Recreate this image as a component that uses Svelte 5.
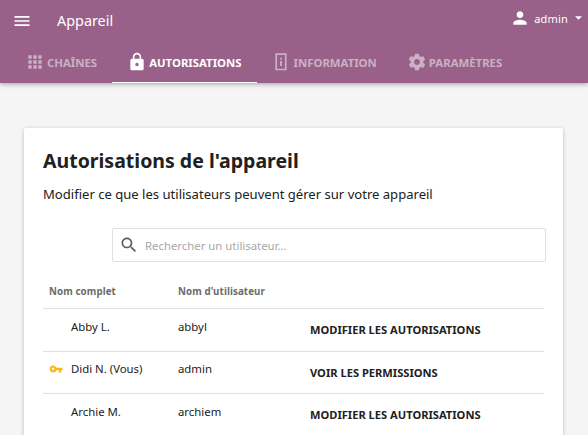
<script>
  const tabs = [
    { label: 'CHAÎNES', icon: 'grid' },
    { label: 'AUTORISATIONS', icon: 'lock', active: true },
    { label: 'INFORMATION', icon: 'info' },
    { label: 'PARAMÈTRES', icon: 'gear' }
  ];
  const paths = {
    grid: 'M4 8h4V4H4v4zm6 12h4v-4h-4v4zm-6 0h4v-4H4v4zm0-6h4v-4H4v4zm6 0h4v-4h-4v4zm6-10v4h4V4h-4zm-6 4h4V4h-4v4zm6 6h4v-4h-4v4zm0 6h4v-4h-4v4z',
    lock: 'M18 8h-1V6c0-2.76-2.24-5-5-5S7 3.24 7 6v2H6c-1.1 0-2 .9-2 2v10c0 1.1.9 2 2 2h12c1.1 0 2-.9 2-2V10c0-1.1-.9-2-2-2zm-6 9c-1.1 0-2-.9-2-2s.9-2 2-2 2 .9 2 2-.9 2-2 2zm3.1-9H8.9V6c0-1.71 1.39-3.1 3.1-3.1 1.71 0 3.1 1.39 3.1 3.1v2z',
    info: 'M4 1.5h13.5V22H4V1.5zm2 2v16.5h9.5V3.5H6zM9.7 7h2.2v2.4H9.7V7zm0 3.8h2.2v6H9.7v-6z',
    gear: 'M19.43 12.98c.04-.32.07-.64.07-.98s-.03-.66-.07-.98l2.11-1.65c.19-.15.24-.42.12-.64l-2-3.46c-.12-.22-.39-.3-.61-.22l-2.49 1c-.52-.4-1.08-.73-1.69-.98l-.38-2.65C14.46 2.18 14.25 2 14 2h-4c-.25 0-.46.18-.49.42l-.38 2.65c-.61.25-1.17.59-1.69.98l-2.49-1c-.23-.09-.49 0-.61.22l-2 3.46c-.13.22-.07.49.12.64l2.11 1.65c-.04.32-.07.65-.07.98s.03.66.07.98l-2.11 1.65c-.19.15-.24.42-.12.64l2 3.46c.12.22.39.3.61.22l2.49-1c.52.4 1.08.73 1.69.98l.38 2.65c.03.24.24.42.49.42h4c.25 0 .46-.18.49-.42l.38-2.65c.61-.25 1.17-.59 1.69-.98l2.49 1c.23.09.49 0 .61-.22l2-3.46c.12-.22.07-.49-.12-.64l-2.11-1.65zM12 15.5c-1.93 0-3.5-1.57-3.5-3.5s1.57-3.5 3.5-3.5 3.5 1.57 3.5 3.5-1.57 3.5-3.5 3.5z'
  };
  const rows = [
    { name: 'Abby L.', user: 'abbyl', action: 'MODIFIER LES AUTORISATIONS' },
    { name: 'Didi N. (Vous)', user: 'admin', action: 'VOIR LES PERMISSIONS', key: true },
    { name: 'Archie M.', user: 'archiem', action: 'MODIFIER LES AUTORISATIONS' }
  ];
</script>

<div class="page">
  <header class="bar">
    <div class="top">
      <svg class="menu" viewBox="0 0 24 24" width="20" height="20"><path d="M3 18h18v-2H3v2zm0-5h18v-2H3v2zm0-7v2h18V6H3z" /></svg>
      <span class="title">Appareil</span>
      <div class="user">
        <svg viewBox="0 0 24 24" width="20" height="20"><path d="M12 12c2.21 0 4-1.79 4-4s-1.79-4-4-4-4 1.79-4 4 1.79 4 4 4zm0 2c-2.67 0-8 1.34-8 4v2h16v-2c0-2.66-5.33-4-8-4z" /></svg>
        <span class="uname">admin</span>
        <svg class="caret" viewBox="0 0 10 5" width="7" height="4"><path d="M0 0l5 5 5-5z" /></svg>
      </div>
    </div>
    <nav class="tabs">
      {#each tabs as t}
        <div class="tab" class:active={t.active}>
          <svg viewBox="0 0 24 24" width="20" height="20"><path fill-rule="evenodd" d={paths[t.icon]} /></svg>
          <span>{t.label}</span>
        </div>
      {/each}
    </nav>
  </header>

  <main class="content">
    <section class="card">
      <h1>Autorisations de l'appareil</h1>
      <p>Modifier ce que les utilisateurs peuvent gérer sur votre appareil</p>
      <div class="search">
        <svg viewBox="0 0 24 24" width="20" height="20"><path d="M15.5 14h-.79l-.28-.27C15.41 12.59 16 11.11 16 9.5 16 5.91 13.09 3 9.5 3S3 5.91 3 9.5 5.91 16 9.5 16c1.61 0 3.09-.59 4.23-1.57l.27.28v.79l5 4.99L20.49 19l-4.99-5zm-6 0C7.01 14 5 11.99 5 9.5S7.01 5 9.5 5 14 7.01 14 9.5 11.99 14 9.5 14z" /></svg>
        <span>Rechercher un utilisateur...</span>
      </div>
      <div class="thead row">
        <div class="c1">Nom complet</div>
        <div class="c2">Nom d'utilisateur</div>
      </div>
      {#each rows as r}
        <div class="row item">
          <div class="c1">
            <span class="keyslot">
              {#if r.key}
                <svg viewBox="0 0 24 24" width="14" height="14"><path d="M12.65 10C11.83 7.67 9.61 6 7 6c-3.31 0-6 2.69-6 6s2.69 6 6 6c2.61 0 4.83-1.67 5.65-4H17v4h4v-4h2v-4H12.65zM7 14c-1.1 0-2-.9-2-2s.9-2 2-2 2 .9 2 2-.9 2-2 2z" /></svg>
              {/if}
            </span>
            {r.name}
          </div>
          <div class="c2">{r.user}</div>
          <div class="c3">{r.action}</div>
        </div>
      {/each}
    </section>
  </main>
</div>

<style>
  :global(body) {
    margin: 0;
    background: #f5f5f5;
    font-family: "Noto Sans", sans-serif;
    overflow: hidden;
  }
  .page {
    height: 435px;
    overflow: hidden;
  }
  .bar {
    background: #996189;
    color: #fff;
    height: 83px;
    box-shadow: 0 1px 5px rgba(0, 0, 0, 0.35);
    display: flex;
    flex-direction: column;
    position: relative;
  }
  .top {
    height: 41px;
    display: flex;
    align-items: center;
    padding: 0 6px 0 12px;
  }
  .top svg { fill: #fff; }
  .title {
    margin-left: 25px;
    font-size: 14.4px;
  }
  .user {
    margin-left: auto;
    display: flex;
    align-items: center;
    margin-top: -5px;
  }
  .uname {
    font-size: 11px;
    margin-left: 4px;
    margin-right: 7px;
    letter-spacing: 0.2px;
  }
  .tabs {
    display: flex;
    height: 42px;
    padding-left: 10px;
  }
  .tab {
    display: flex;
    align-items: center;
    gap: 2px;
    padding: 0 15px;
    font-size: 11.375px;
    font-weight: 700;
    color: rgba(255, 255, 255, 0.5);
    box-sizing: border-box;
  }
  .tab svg { fill: currentColor; flex: none; }
  .tab.active {
    color: #fff;
    border-bottom: 1px solid #fff;
    padding-top: 1px;
  }
  .content {
    padding: 45px 25px 0 24px;
  }
  .card {
    background: #fff;
    border-radius: 2px;
    box-shadow: 0 1px 4px rgba(0, 0, 0, 0.22);
    padding: 19px 19px 40px;
    height: 400px;
    box-sizing: border-box;
  }
  h1 {
    margin: 0;
    font-size: 19.5px;
    line-height: 28px;
    font-weight: 700;
    color: #212121;
  }
  p {
    margin: 9px 0 0;
    font-size: 13.07px;
    line-height: 20px;
    color: #212121;
  }
  .search {
    margin: 24px 0 0 69px;
    margin-right: -2px;
    height: 34px;
    box-sizing: border-box;
    border: 1px solid #e0e0e0;
    border-radius: 2px;
    display: flex;
    align-items: center;
    padding-left: 6px;
    gap: 6px;
    font-size: 11.375px;
    color: #a8a8a8;
  }
  .search svg { fill: #616161; }
  .row {
    display: flex;
    box-sizing: border-box;
    border-bottom: 1px solid #e0e0e0;
  }
  .thead {
    margin-top: 14px;
    height: 33px;
    align-items: center;
    font-size: 9.75px;
    font-weight: 700;
    color: #6b6b6b;
    letter-spacing: 0.1px;
    padding-bottom: 2px;
  }
  .c1 { width: 129px; padding-left: 6px; box-sizing: border-box; display: flex; align-items: center; }
  .c2 { width: 133px; padding-left: 6px; box-sizing: border-box; }
  .c3 { padding-left: 5px; }
  .item {
    height: 42.5px;
    font-size: 11.375px;
    color: #212121;
    padding-bottom: 7px;
    align-items: center;
  }
  .item .c3 {
    font-size: 11.14px;
    font-weight: 700;
    padding-top: 7px;
  }
  .keyslot {
    width: 22px;
    flex: none;
    display: flex;
    align-items: center;
  }
  .keyslot svg { fill: #f9b91d; }
</style>
